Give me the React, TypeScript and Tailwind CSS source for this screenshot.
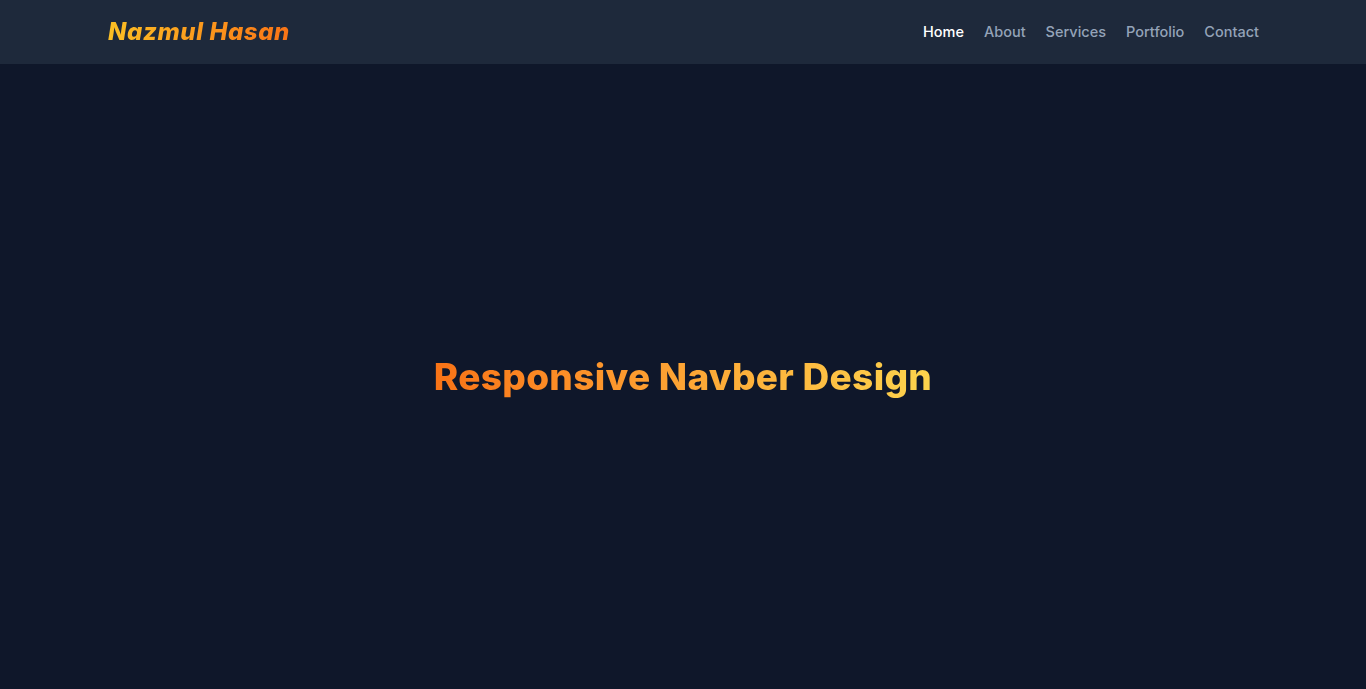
export default function App() {
  const links = ["Home", "About", "Services", "Portfolio", "Contact"];
  return (
    <div className="min-h-screen bg-[#0f172a] font-['Inter',sans-serif]">
      <nav className="h-16 bg-[#1e293b]">
        <div className="max-w-6xl mx-auto h-full flex items-center justify-between">
          <a
            href="#"
            className="pl-px text-[24px] font-extrabold italic tracking-[0.6px] bg-gradient-to-r from-[#fbbf24] to-[#f97316] bg-clip-text text-transparent"
          >
            Nazmul Hasan
          </a>
          <ul className="flex items-center gap-5 text-[14.5px] font-medium">
            {links.map((l, i) => (
              <li key={l}>
                <a href="#" className={i === 0 ? "text-white" : "text-[#94a3b8]"}>
                  {l}
                </a>
              </li>
            ))}
          </ul>
        </div>
      </nav>
      <main className="h-[625px] flex items-center justify-center">
        <h1 className="text-[37px] font-extrabold tracking-[0.3px] bg-gradient-to-r from-[#f97316] to-[#fcd34d] bg-clip-text text-transparent">
          Responsive Navber Design
        </h1>
      </main>
    </div>
  );
}
